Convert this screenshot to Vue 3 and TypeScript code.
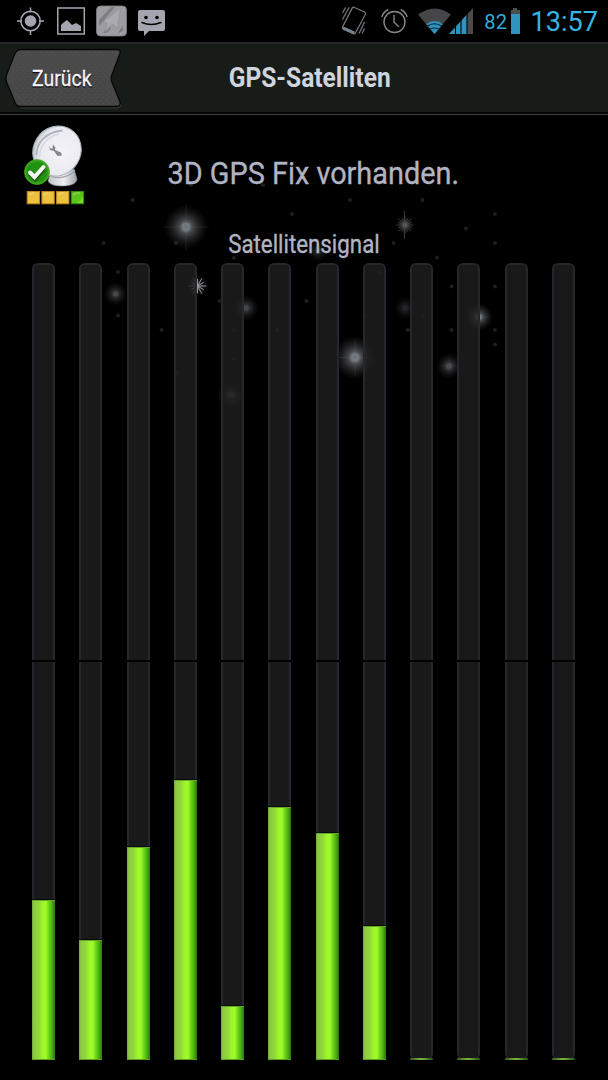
<script setup lang="ts">
interface Glow { x: number; y: number; r: number; o: number; rays: number }

const levels: number[] = [160, 120, 213, 279.5, 53.5, 252.5, 226.5, 133.5, 1.5, 1.5, 1.5, 1.5]

const glows: Glow[] = [
  { x: 186, y: 227, r: 22, o: 0.85, rays: 23 },
  { x: 355, y: 357.5, r: 22, o: 0.85, rays: 18 },
  { x: 115.5, y: 294, r: 12, o: 0.5, rays: 0 },
  { x: 246, y: 308, r: 13, o: 0.5, rays: 7 },
  { x: 449, y: 366, r: 13, o: 0.55, rays: 8 },
  { x: 405, y: 308, r: 12, o: 0.28, rays: 7 },
  { x: 318, y: 251, r: 11, o: 0.36, rays: 0 },
  { x: 479, y: 317, r: 14, o: 0.85, rays: 10 },
  { x: 197, y: 286, r: 12, o: 0.45, rays: 0 },
  { x: 231, y: 395, r: 14, o: 0.5, rays: 0 },
]

const dots: [number, number][] = [
  [132.5, 200], [103.5, 243], [176, 243], [118, 272], [118, 315.5], [161.5, 330],
  [292, 214], [234, 258], [219.5, 301], [306.5, 301], [234, 330], [277, 330],
  [234, 359], [176.5, 373], [350, 200], [422.5, 200], [495, 214], [466, 228.5],
  [495, 243], [393.5, 243], [437, 257.5], [379, 272], [451.5, 286.5], [495, 286.5],
  [364.5, 315.5], [422.5, 315.5], [408, 330], [451.5, 330], [495, 330], [495, 344.5],
  [191, 185], [263, 185],
]

const sparkle = (cx: number, cy: number, r: number, n: number): string =>
  Array.from({ length: n }, (_, i) => {
    const a = (i / n) * Math.PI * 2
    const len = i % 2 ? r * 0.8 : r
    return `M${cx} ${cy}L${(cx + Math.cos(a) * len).toFixed(1)} ${(cy + Math.sin(a) * len).toFixed(1)}`
  }).join('')
</script>

<template>
  <div class="screen">
    <svg class="stars" width="608" height="440" viewBox="0 0 608 440">
      <defs>
        <radialGradient id="glow">
          <stop offset="0" stop-color="#929ba1" />
          <stop offset="0.18" stop-color="#7d858a" />
          <stop offset="0.3" stop-color="#626468" stop-opacity="0.85" />
          <stop offset="0.6" stop-color="#48494c" stop-opacity="0.5" />
          <stop offset="1" stop-color="#333" stop-opacity="0" />
        </radialGradient>
      </defs>
      <circle v-for="(d, i) in dots" :key="'d' + i" :cx="d[0]" :cy="d[1]" r="2" fill="#1e1e1f" />
      <g v-for="(g, i) in glows" :key="'g' + i" :opacity="g.o">
        <circle :cx="g.x" :cy="g.y" :r="g.r" fill="url(#glow)" />
        <circle :cx="g.x" :cy="g.y" :r="g.r * 0.18" fill="#899197" />
        <path v-if="g.rays" :d="`M${g.x - g.rays} ${g.y}h${g.rays * 2}M${g.x} ${g.y - g.rays}v${g.rays * 2}`" stroke="#72777a" stroke-width="0.6" opacity="0.4" />
      </g>
      <circle cx="405" cy="225" r="9" fill="url(#glow)" opacity=".6" />
      <path :d="sparkle(405, 225, 9, 16)" stroke="#65676a" stroke-width="0.6" opacity=".7" />
      <path d="M404.500 211v28" stroke="#46474a" opacity=".8" />
      <path :d="sparkle(197.5, 286, 9, 12)" stroke="#9ba1a4" stroke-width="0.9" />
    </svg>

    <header class="status">
      <svg width="170" height="42" viewBox="0 0 170 42">
        <g fill="none" stroke="#a5a5b0" stroke-width="1.5">
          <circle cx="30.5" cy="21" r="9.7" />
          <path d="M30.5 7.5v5M30.5 30v5M17 21h5M39 21h5" />
          <rect x="57.8" y="8" width="26.5" height="26" />
        </g>
        <circle cx="30.5" cy="21" r="5.8" fill="#a5a5b0" />
        <path d="M61 31V25l2-2 4-3 3 3 2 2 4-2 5 3v5z" fill="#a5a5b0" />
        <rect x="96.5" y="6" width="30" height="30" rx="4" fill="#9c9ca1" stroke="#7d7d82" stroke-width=".8" />
        <path d="M99 20L111 7h4L99 26zM103 33L108 26 111 28 107 33zM118 33l5-8v6z" fill="#7e7e83" />
        <path d="M120.500 8l-3 20-5-4-7.500 8 2-9-4-1z" fill="#a9abb1" stroke="#88898f" stroke-width=".5" />
        <path d="M140 10h23q2 0 2 2v17q0 2-2 2h-14l-5 5v-5h-4q-2 0-2-2V12q0-2 2-2z" fill="#a5a5b0" />
        <circle cx="146" cy="17.5" r="1.8" /><circle cx="157" cy="17.5" r="1.8" />
        <path d="M142 22.5q9 4 19 0" fill="none" stroke="#000" stroke-width="1.5" stroke-linecap="round" />
      </svg>
      <svg width="268" height="42" viewBox="340 0 268 42">
        <g fill="none" stroke="#707377" stroke-width="1.3">
          <path d="M354.500 7.500l10 4.500q1.500 1 .800 2.500l-9.800 18.500q-.700 1.300-2 .700l-10-4.500q-1.500-1-.800-2.500l9.500-18.500q1-1.500 2.300-.700z" />
          <path d="M342.500 13l3-5.500M342.500 19.500l6.500-12M359 33.500l5.500-11.500M362 33.500l2.500-5" />
        </g>
        <path d="M343.500 26.500l11.500 5.300-1.500 2.500-11-5z" fill="#76858c" />
        <g fill="none" stroke="#85868a" stroke-width="1.4">
          <circle cx="394.500" cy="22" r="10.500" />
          <path d="M394 15v7l5 5M381.800 17q1.500-5 6.500-7.500M400.700 9.500q5 2.500 6.500 7.500" />
        </g>
        <path d="M418 14.500q17-12 33 0L434.500 34z" fill="#464648" />
        <path d="M426.300 24.300q8.200-6.500 16.400 0L434.500 34z" fill="#2f94bd" />
        <path d="M427 26.300q7.500-5 15 0M429.500 29.500q5-3 10 0" fill="none" stroke="#071c25" stroke-width="1.100" />
        <path d="M449 34l24-26v26z" fill="#4b4b4d" />
        <path d="M449 34L467 14.500V34z" fill="#2f94bd" />
        <path d="M455.500 23v12M461 17v18M467 11v24" stroke="#000" stroke-width="1.100" />
        <text class="roboto" x="484.300" y="28.700" font-size="20" textLength="22.700" lengthAdjust="spacingAndGlyphs" fill="#33a9d8">82</text>
        <path d="M513 8h4v2h3v24h-9V10h2z" fill="#4e4d4d" />
        <path d="M511 14h9v20h-9z" fill="#2f94bd" />
        <text class="roboto" x="530.500" y="31" font-size="27" textLength="67.500" lengthAdjust="spacingAndGlyphs" fill="#33b5e5">13:57</text>
      </svg>
    </header>

    <nav class="bar">
      <svg width="608" height="73" viewBox="0 42 608 73">
        <defs>
          <linearGradient id="btn" x1="0" y1="0" x2="0" y2="1">
            <stop offset="0" stop-color="#4b4b4c" /><stop offset="1" stop-color="#464647" />
          </linearGradient>
          <pattern id="grain" width="6" height="6" patternUnits="userSpaceOnUse">
            <path d="M1 1h1v1h-1zM4 4h1v1h-1z" fill="#535354" />
          </pattern>
        </defs>
        <path id="tag" d="M21 49.500H117q4 0 3 4L111.500 76q-1 2.500 0 5L120 102q1 4-3 4.500H20q-3 0-4.500-3L6.500 82q-1.500-3.500 0-7L15 53.500q2-4 6-4z" fill="url(#btn)" stroke="#050605" stroke-width="1.300" />
        <path d="M20 108h97q4-.5 4-3.500" fill="none" stroke="#343735" />
        <path d="M21 51H117L109.500 78 118 105H20L8 78z" fill="url(#grain)" />
        <g class="roboto">
          <text x="32" y="87.300" font-size="22.500" textLength="59.500" lengthAdjust="spacingAndGlyphs" fill="#111" stroke="#111">Zurück</text>
          <text x="32" y="86.300" font-size="22.500" textLength="59.500" lengthAdjust="spacingAndGlyphs" fill="#f5f5fb" stroke="#f5f5fb" stroke-width=".3">Zurück</text>
          <text x="228.700" y="86.600" font-size="27.500" font-weight="700" textLength="162" lengthAdjust="spacingAndGlyphs" fill="#d0d4dc">GPS-Satelliten</text>
        </g>
      </svg>
    </nav>

    <section class="fix">
      <svg width="608" height="147" viewBox="0 115 608 147">
        <defs>
          <radialGradient id="dish" cx=".6" cy=".45" r=".6">
            <stop offset="0" stop-color="#f3f3f8" /><stop offset=".8" stop-color="#eaeaf0" /><stop offset="1" stop-color="#c5c9d0" />
          </radialGradient>
          <linearGradient id="foot"><stop offset="0" stop-color="#c1c4ca" /><stop offset=".55" stop-color="#eeeef2" /><stop offset="1" stop-color="#9da2a9" /></linearGradient>
          <radialGradient id="ok"><stop offset="0" stop-color="#259313" /><stop offset=".75" stop-color="#209010" /><stop offset="1" stop-color="#44af24" /></radialGradient>
        </defs>
        <path d="M50 174L74 169 77 179q-1 7-15 7-12 0-14-5z" fill="url(#foot)" stroke="#868b92" stroke-width=".6" />
        <path d="M51 176.500q14 4 24-6" fill="none" stroke="#a2a7ae" stroke-width="1.200" />
        <ellipse cx="57" cy="151" rx="23.700" ry="25.500" transform="rotate(32 57 151)" fill="url(#dish)" stroke="#adb3bb" />
        <path d="M36.500 155c0-12 9-23 26-24.500" fill="none" stroke="#aab3be" stroke-width="1.800" />
        <path d="M39.500 157c0-12 8-20 19-23" fill="none" stroke="#d2d7de" stroke-width="1.500" />
        <path d="M49 145.500l1.500 3h2l.5-4 2.500 3-.5 2.500 6 2.500 1 3-4.500.5-3.500-5-4-1z" fill="#848991" />
        <circle cx="37" cy="172" r="12.500" fill="url(#ok)" stroke="#47ad24" stroke-width=".7" />
        <path d="M30 173l4.500 4.500 9-10" fill="none" stroke="#20590f" stroke-width="5" transform="translate(.5 1)" />
        <path d="M30 172.500l4.500 4.500 9-10" fill="none" stroke="#f6f6f8" stroke-width="4" stroke-linecap="round" />
        <g fill="#ecc23e" stroke="#bf8722" stroke-width="1">
          <rect x="27.200" y="191.500" width="12.300" height="12.300" /><rect x="41.900" y="191.500" width="12.300" height="12.300" /><rect x="56.600" y="191.500" width="12.300" height="12.300" />
          <rect x="71.300" y="191.500" width="12.300" height="12.300" fill="#5bc31b" stroke="#328b16" />
        </g>
        <path d="M29 195l3-2h2M43.700 195l3-2h2M58.400 195l3-2h2" fill="none" stroke="#efd99b" />
        <path d="M73 195q3-3 7-2" fill="none" stroke="#9edf68" />
        <path d="M76 203q6-2 7-7v7z" fill="#7edd2b" />
        <g class="roboto" fill="#b1b4c3" stroke="#b1b4c3" stroke-width=".35">
          <text x="167.500" y="183.700" font-size="31.500" textLength="291.500" lengthAdjust="spacingAndGlyphs">3D GPS Fix vorhanden.</text>
          <text x="228.200" y="252.600" font-size="25" textLength="151.500" lengthAdjust="spacingAndGlyphs">Satellitensignal</text>
        </g>
      </svg>
    </section>

    <main class="chart">
      <div v-for="(h, i) in levels" :key="i" class="track">
        <div class="notch"></div>
        <div class="fill" :class="{ idle: h < 3 }" :style="{ height: h + 'px' }"></div>
      </div>
    </main>
  </div>
</template>

<style>
html, body { margin: 0; background: #000; }
</style>
<style scoped>
.screen { position: relative; width: 608px; height: 1080px; background: #000; overflow: hidden; display: flex; flex-direction: column; }
.screen svg { display: block; flex: none; }
.stars { position: absolute; left: 0; top: 0; }
.roboto { font-family: Roboto, "Liberation Sans", sans-serif; }
.status { height: 42px; flex: none; display: flex; justify-content: space-between; }
.bar { box-sizing: border-box; height: 73px; flex: none; background: linear-gradient(#252428 0 2px, #181c19 2px 70px, #050505 70px 72px, #414242 72px); }
.fix { height: 147px; flex: none; position: relative; }
.chart { position: relative; height: 798px; flex: none; box-sizing: border-box; padding: 0 33px 0 32px; display: flex; justify-content: space-between; }
.track { position: relative; box-sizing: border-box; width: 23px; height: 797px; margin-top: .5px; border: 2px solid #26272c; border-radius: 6px; background: rgba(32, 32, 32, .78); background-clip: padding-box; display: flex; flex-direction: column; justify-content: flex-end; }
.notch { position: absolute; left: -2px; right: -2px; top: 395px; height: 2px; background: #000; }
.fill { box-sizing: border-box; flex: none; margin: 0 -2px -2px; border-top: 1px solid #67a82c; border-bottom: 1px solid #5b9e20; background: linear-gradient(90deg, #70a83b 0, #8ec843 8%, #91d83a 30%, #9cf52a 45%, #a1fb29 60%, #79df1c 70%, #50b415 85%, #26790e 100%); box-shadow: 0 -1px #0a0a0a; }
.fill.idle { border: 0; box-shadow: none; background: linear-gradient(90deg, #355020, #79b53c 45%, #64a832 60%, #204d18); }
</style>
